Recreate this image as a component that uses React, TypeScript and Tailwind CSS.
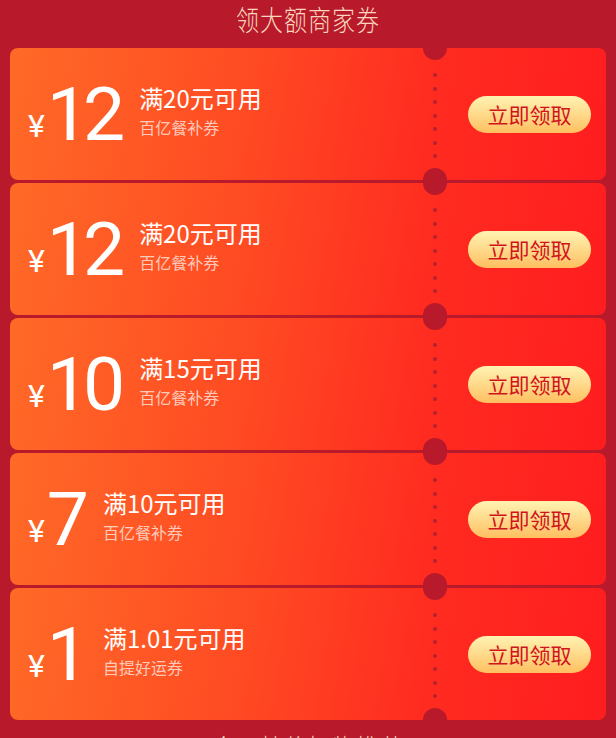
import React from 'react'

type Coupon = {
  amount: string
  limit: string
  name: string
}

const coupons: Coupon[] = [
  { amount: '12', limit: '满20元可用', name: '百亿餐补券' },
  { amount: '12', limit: '满20元可用', name: '百亿餐补券' },
  { amount: '10', limit: '满15元可用', name: '百亿餐补券' },
  { amount: '7', limit: '满10元可用', name: '百亿餐补券' },
  { amount: '1', limit: '满1.01元可用', name: '自提好运券' },
]

function CouponCard({ coupon }: { coupon: Coupon }) {
  return (
    <div className="relative flex h-[132px] items-center rounded-lg bg-[linear-gradient(100deg,#ff6a27_0%,#ff4a23_40%,#ff2b20_70%,#ff1d1f_100%)] pl-[18px] pr-[15px]">
      {/* 票券缺口 */}
      <span className="absolute left-[413px] top-[-12px] h-6 w-6 rounded-full bg-[#b81a2b]" />
      <span className="absolute bottom-[-12px] left-[413px] h-6 w-6 rounded-full bg-[#b81a2b]" />
      <div className="absolute left-[423px] top-[25px] flex flex-col gap-[9.5px]">
        {[0, 1, 2, 3, 4, 5, 6].map((i) => (
          <span key={i} className="h-[4px] w-[4px] rounded-full bg-[#b8202c]" />
        ))}
      </div>

      <div className="flex items-end">
        <span className="mb-[2px] font-['Roboto'] text-[32px] leading-none text-white">¥</span>
        <span className="ml-[2px] font-['Roboto'] text-[75px] font-normal leading-[0.8] tracking-[-6px] text-white">
          {coupon.amount}
        </span>
      </div>
      <div className="ml-[20px] mt-[-8px] flex flex-col font-['Noto_Sans_CJK_SC',sans-serif]">
        <span className="text-[24px] leading-[30px] text-white">{coupon.limit}</span>
        <span className="mt-[4px] text-[16px] leading-[20px] text-white/70">{coupon.name}</span>
      </div>

      <button className="ml-auto h-[37px] w-[123px] rounded-full bg-gradient-to-b from-[#fff3b2] to-[#ffbf5f] font-['Noto_Sans_CJK_SC',sans-serif] text-[21px] leading-none text-[#d1131d]">
        立即领取
      </button>
    </div>
  )
}

export default function App() {
  return (
    <div className="h-[738px] w-[616px] overflow-hidden bg-[#b81a2b]">
      <div className="flex h-[48px] items-center justify-center pb-[10px]">
        <h1 className="origin-center scale-y-125 font-['Noto_Sans_CJK_SC',sans-serif] text-[23px] font-light leading-none tracking-[1px] text-[#f9d6be]">
          领大额商家券
        </h1>
      </div>
      <div className="flex flex-col gap-[3px] px-[10px]">
        {coupons.map((c, i) => (
          <CouponCard key={i} coupon={c} />
        ))}
      </div>
      <div className="mt-[17px] flex justify-center">
        <h2 className="scale-y-125 font-['Noto_Sans_CJK_SC',sans-serif] text-[23px] font-light leading-none tracking-[1px] text-[#f9d6be]">
          今日特价好物推荐
        </h2>
      </div>
    </div>
  )
}
